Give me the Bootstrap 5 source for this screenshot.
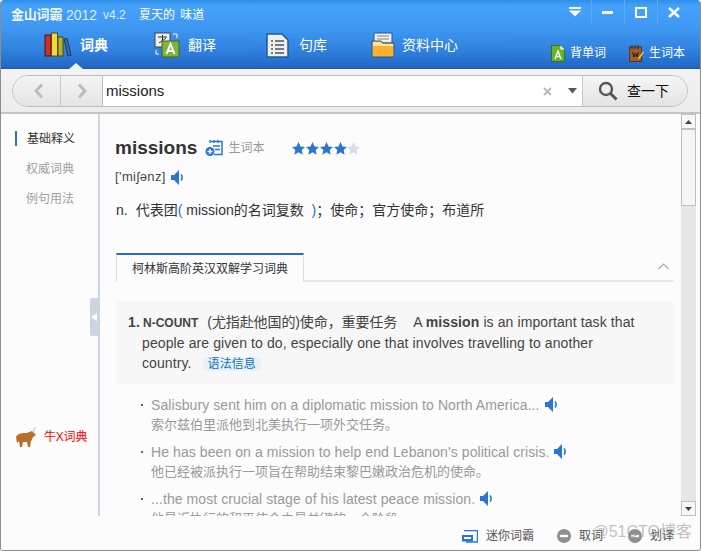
<!DOCTYPE html>
<html lang="zh">
  <head>
    <meta charset="UTF-8" />
    <title>金山词霸 2012</title>
    <link href="https://cdn.jsdelivr.net/npm/bootstrap@5.3.2/dist/css/bootstrap.min.css" rel="stylesheet" />
    <style>
      html, body { margin: 0; height: 100%; overflow: hidden; background: #fff; }
      body { font-family: "Liberation Sans", "Noto Sans CJK SC", sans-serif; font-size: 12px; color: #333; }
      .app-win { width: 701px; height: 551px; position: relative; border: 1px solid #8d8d8d; border-top: 0; border-radius: 4px 4px 3px 3px; overflow: hidden; background: #fcfcfc; }
      .hdr { height: 69px; flex: none; background: linear-gradient(#2f8fe8 0, #45a2fb 6px, #3f98f2 28px, #2f7fdc 52px, #2167c6 67px, #1a5aa8 69px); color: #fff; position: relative; }
      .title-row { height: 28px; padding: 2px 0 0 10px; }
      .brand { font-weight: 700; font-size: 13px; letter-spacing: -.2px; width: 55px; opacity: .93; }
      .ver { font-size: 14px; width: 37px; color: #dceeff; }
      .ver-s { font-size: 12px; width: 36px; color: #dceeff; }
      .slogan { font-size: 12px; word-spacing: 2px; }
      .win-btn { width: 33px; height: 24px; border-left: 1px solid #5ba9f3; }
      .win-first { width: 33px; height: 24px; }
      .nav-cell { position: absolute; top: 31px; height: 28px; font-size: 14px; }
      .nav-main { font-weight: 700; font-size: 14px; }
      .nav-side { position: absolute; top: 44px; height: 18px; font-size: 12px; }
      .notch { position: absolute; left: 68px; top: 63px; width: 0; height: 0; border: 7px solid transparent; border-top: 0; border-bottom: 6px solid #f1f1f1; }
      .search-wrap { height: 45px; flex: none; background: linear-gradient(#f3f3f3, #ececec); border-bottom: 2px solid #c4c4c4; padding: 6px 12px 0 11px; }
      .search-pill { height: 32px; border: 1px solid #bdbdbd; border-radius: 16px; background: #fff; overflow: hidden; }
      .hist { width: 90px; background: linear-gradient(#f4f4f4, #e4e4e4); border-right: 1px solid #bdbdbd; }
      .hist-b { width: 47px; }
      .hist-b + .hist-b { border-left: 1px solid #c8c8c8; width: 42px; }
      .query { font-size: 15px; color: #222; padding-left: 3px; }
      .go-btn { width: 105px; background: linear-gradient(#f5f5f5, #e3e3e3); border-left: 1px solid #c8c8c8; font-size: 14px; color: #111; padding-left: 15px; gap: 9px; }
      .side-pane { width: 99px; flex: none; background: #fcfcfc; border-right: 2px solid #ccd5df; position: relative; padding-top: 15px; }
      .side-item { height: 30px; line-height: 21px; padding-left: 25px; color: #a0a0a0; }
      .side-on { color: #333; padding-left: 26px; position: relative; }
      .side-on::before { content: ""; position: absolute; left: 14px; top: 2px; width: 2px; height: 15px; background: #2a74d6; }
      .side-tab { position: absolute; right: -1px; top: 184px; width: 9px; height: 38px; background: #c9d6e2; border-radius: 2px 0 0 2px; }
      .side-tab::after { content: ""; position: absolute; left: 1px; top: 15px; border: 4px solid transparent; border-left: 0; border-right: 6px solid #fff; }
      .bull-link { color: #f00; margin: auto 0 68px 14px; gap: 6px; font-size: 12px; letter-spacing: -.2px; }
      .pane { overflow: hidden; padding: 22px 7px 0 15px; background: #fcfcfc; }
      .word { font-size: 19px; font-weight: 700; color: #333; line-height: 24px; }
      .word-add { margin-left: 8px; margin-right: 4px; }
      .muted-t { color: #999; margin-left: 1px; }
      .stars { margin-left: 28px; }
      .phon { font-size: 13px; letter-spacing: .4px; line-height: 16px; margin-top: 9px; color: #444; }
      .defn { font-size: 14px; margin-top: 15px; line-height: 20px; padding-left: 1px; }
      .tab-row { margin-top: 33px; height: 29px; border-bottom: 2px solid #e8e8e8; position: relative; margin-left: 1px; }
      .tab-on { width: 188px; height: 29px; border-top: 2px solid #1f6fd0; border-right: 1px solid #ddd; border-left: 1px solid #ddd; background: #fcfcfc; padding: 5px 0 0 15px; color: #333; }
      .tab-up { position: absolute; right: 5px; top: 10px; }
      .sense { margin: 19px 0 0 1px; background: #f7f7f7; height: 83px; padding: 11px 30px 0 26px; font-size: 14px; line-height: 20px; letter-spacing: .1px; color: #444; position: relative; }
      .sense-no { position: absolute; left: 12px; font-weight: 700; }
      .tag { font-size: 12px; font-weight: 700; margin-right: 9px; letter-spacing: 0; }
      .sense-zh { letter-spacing: -.1px; margin-right: 4px; }
      .gram { font-size: 12px; color: #0a73c9; background: #e8f0f8; border-radius: 3px; padding: 0 5px; margin-left: 11px; }
      .eg { margin: 12px 0 0; padding: 0; list-style: none; }
      .eg li { padding-left: 36px; position: relative; height: 47px; font-size: 14px; line-height: 19px; letter-spacing: .08px; color: #999; }
      .eg li::before { content: ""; position: absolute; left: 26px; top: 8px; width: 2px; height: 2px; background: #666; }
      .eg-zh { font-size: 13px; letter-spacing: 0; }
      .spk-i { margin-left: 1px; vertical-align: -2px; }
      .sbar { width: 19px; flex: none; background: #fcfcfc; padding-right: 4px; }
      .sbar-in { background: #e6e6e6; height: 100%; }
      .sbar-btn { height: 15px; background: #f7f7f7; border: 1px solid #bfbfbf; }
      .sbar-thumb { height: 77px; background: #f5f5f5; border: 1px solid #bfbfbf; }
      .foot { height: 34px; flex: none; background: #fcfcfc; color: #555; justify-content: flex-end; padding: 6px 26px 0 0; }
      .foot-i { gap: 8px; }
      .wm { position: absolute; right: 8px; bottom: 8px; font-size: 16px; color: rgba(140,140,140,.55); line-height: 20px; }
    </style>
  </head>
  <body>
    <div class="app-win d-flex flex-column">
      <div class="hdr">
        <div class="title-row d-flex align-items-center">
          <span class="brand">金山词霸</span>
          <span class="ver">2012</span>
          <span class="ver-s">v4.2</span>
          <span class="slogan">夏天的 味道</span>
          <div class="d-flex ms-auto align-self-start" style="margin-top:-2px;margin-right:10px">
            <div class="win-first d-flex align-items-center justify-content-center">
              <svg width="12" height="10" viewBox="0 0 12 10"><path d="M0 0h12v2H0zM0 3.500h12L6 9.500z" fill="#fff"/></svg>
            </div>
            <div class="win-btn d-flex align-items-center justify-content-center">
              <svg width="12" height="4" viewBox="0 0 12 4"><rect width="11" height="3" y="1" fill="#fff"/></svg>
            </div>
            <div class="win-btn d-flex align-items-center justify-content-center">
              <svg width="12" height="11" viewBox="0 0 12 11"><path d="M1 1h10v9H1z" fill="none" stroke="#fff" stroke-width="2"/></svg>
            </div>
            <div class="win-btn d-flex align-items-center justify-content-center">
              <svg width="12" height="11" viewBox="0 0 12 11"><path d="M1 1l10 9M11 1L1 10" stroke="#fff" stroke-width="2.400"/></svg>
            </div>
          </div>
        </div>

        <div class="nav-cell nav-main d-flex align-items-center" style="left:43px;gap:8px">
          <svg width="28" height="26" viewBox="0 0 28 26"><rect x="1" y="3" width="6" height="21" fill="#c8302c" stroke="#4a1512"/><rect x="7.500" y="1" width="6" height="23" fill="#f1d93c" stroke="#5a4d10"/><rect x="14" y="5" width="5" height="19" fill="#b5b52c" stroke="#4a4a10"/><path d="M20 7l3-.6 4 17-3 .6z" fill="#3d6f9e" stroke="#1b3a5a"/></svg>
          <span>词典</span>
        </div>
        <div class="nav-cell d-flex align-items-center" style="left:153px;gap:8px">
          <svg width="26" height="26" viewBox="0 0 26 26"><rect x="1" y="1" width="15" height="14" fill="#eee" stroke="#444"/><path d="M4 5h9M8.500 3v8M5 11l7-5" stroke="#333"/><rect x="8" y="9" width="17" height="16" fill="#7fb43a" stroke="#3d6a18"/><path d="M12.500 22l4-10 4 10M14 19h5" fill="none" stroke="#fff" stroke-width="2"/><path d="M19 2h4v4M2 18v4h3" fill="none" stroke="#fff"/></svg>
          <span>翻译</span>
        </div>
        <div class="nav-cell d-flex align-items-center" style="left:265px;gap:10px">
          <svg width="23" height="25" viewBox="0 0 23 25"><path d="M1 1h15l6 6v17H1z" fill="#eee" stroke="#1e5c9c" stroke-width="1.500"/><path d="M5 8h2m2 0h9M5 12h2m2 0h9M5 16h2m2 0h9M5 20h2m2 0h9" stroke="#555" stroke-width="1.300"/></svg>
          <span>句库</span>
        </div>
        <div class="nav-cell d-flex align-items-center" style="left:370px;gap:7px">
          <svg width="24" height="26" viewBox="0 0 24 26"><path d="M3 1h18v10H3z" fill="#eee" stroke="#1e5c9c"/><path d="M6 4h12M6 7h12" stroke="#888"/><path d="M1 9h9l2 2h11v14H1z" fill="#fbb130" stroke="#1e5c9c"/><path d="M2 10h7l2 2h11v2H2z" fill="#ffe19a"/></svg>
          <span>资料中心</span>
        </div>
        <div class="nav-side d-flex align-items-center" style="left:550px;gap:5px">
          <svg width="14" height="17" viewBox="0 0 14 17"><path d="M.5.500h9l4 4v12H.5z" fill="#67b32e" stroke="#2f7a14"/><path d="M9.500.500v4h4z" fill="#fff"/><path d="M4 14l3-8 3 8M5 11.500h4" fill="none" stroke="#fff" stroke-width="1.400"/></svg>
          <span>背单词</span>
        </div>
        <div class="nav-side d-flex align-items-center" style="left:628px;gap:5px">
          <svg width="15" height="17" viewBox="0 0 15 17"><rect x=".5" y="2" width="12" height="14.500" fill="#9a5f2c" stroke="#5c3514"/><path d="M3 0v4M6 0v4M9 0v4" stroke="#333" stroke-width="1.200"/><path d="M3.500 7l1.500 5 1.500-4 1.500 4 1.500-5" fill="none" stroke="#2a1505"/><path d="M14.500 7l-5 7" stroke="#f0c040" stroke-width="1.500"/></svg>
          <span>生词本</span>
        </div>
        <div class="notch"></div>
      </div>

      <div class="search-wrap">
        <div class="search-pill d-flex align-items-stretch">
          <div class="hist d-flex">
            <div class="hist-b d-flex align-items-center justify-content-center" style="padding-left:4px">
              <svg width="10" height="16" viewBox="0 0 10 16"><path d="M8 1.500L2 8l6 6.500" fill="none" stroke="#bcbcbc" stroke-width="3"/></svg>
            </div>
            <div class="hist-b d-flex align-items-center justify-content-center">
              <svg width="10" height="16" viewBox="0 0 10 16"><path d="M2 1.500L8 8l-6 6.500" fill="none" stroke="#bcbcbc" stroke-width="3"/></svg>
            </div>
          </div>
          <div class="query flex-grow-1 d-flex align-items-center">
            <span>missions</span>
            <svg class="ms-auto" width="9" height="9" viewBox="0 0 9 9"><path d="M1 1l7 7M8 1L1 8" stroke="#b5bcc0" stroke-width="2"/></svg>
            <svg style="margin:0 5px 0 16px" width="9" height="6" viewBox="0 0 9 6"><path d="M0 0h9L4.500 5.500z" fill="#555"/></svg>
          </div>
          <div class="go-btn d-flex align-items-center">
            <svg width="20" height="20" viewBox="0 0 20 20"><circle cx="8" cy="8" r="6" fill="none" stroke="#555" stroke-width="2.400"/><path d="M12.500 12.500l6 6" stroke="#555" stroke-width="3"/></svg>
            <span>查一下</span>
          </div>
        </div>
      </div>

      <div class="d-flex flex-grow-1" style="min-height:0">
        <div class="side-pane d-flex flex-column">
          <div class="side-item side-on">基础释义</div>
          <div class="side-item">权威词典</div>
          <div class="side-item">例句用法</div>
          <div class="bull-link d-flex align-items-center">
            <svg width="23" height="22" viewBox="0 0 23 22"><path d="M1 11c2-4 7-4 11-4 2-1 4-2 5-2l2 2 2 2-3 2c-1 2-1 3-2 4l-1 6h-2l-1-5H8l-1 5H5l-1-6-2 2z" fill="#b96f2a"/><path d="M18 6c-1-3 1-5 3-5-1 2-1 3-1 5z" fill="#ddd"/></svg>
            <span>牛X词典</span>
          </div>
          <div class="side-tab"></div>
        </div>

        <div class="pane flex-grow-1">
          <div class="d-flex align-items-center">
            <span class="word">missions</span>
            <svg class="word-add" width="18" height="18" viewBox="0 0 18 18"><path d="M5 2.500h12v13H9" fill="none" stroke="#2a74d6" stroke-width="1.500"/><path d="M5 1v3M9 1v3M13 1v3M8 7h7M10 10.500h5" stroke="#2a74d6" stroke-width="1.300"/><circle cx="5" cy="12.500" r="4.500" fill="#2a74d6"/><path d="M2.500 12.500h5M5 10v5" stroke="#fff" stroke-width="1.400"/></svg>
            <span class="muted-t">生词本</span>
            <svg class="stars" width="68" height="13" viewBox="0 0 68 13">
              <path id="s1" d="M6.500 0l2 4.400 4.500.5-3.300 3.100.9 4.700-4.100-2.400-4.100 2.400.9-4.700L0 4.900l4.500-.5z" fill="#2a74d6"/>
              <use href="#s1" x="14"/><use href="#s1" x="28"/><use href="#s1" x="42"/>
              <path transform="translate(55)" d="M6.500 0l2 4.400 4.500.5-3.300 3.100.9 4.700-4.100-2.400-4.100 2.400.9-4.700L0 4.900l4.500-.5z" fill="#d5dde6"/>
            </svg>
          </div>
          <div class="phon d-flex align-items-center">
            <span>['miʃənz]</span>
            <svg style="margin-left:5px" width="14" height="15" viewBox="0 0 14 15"><path d="M0 5h3l5-5v15l-5-5H0z" fill="#2a74d6"/><path d="M10 4.500c1.500 1.500 1.500 4.500 0 6" fill="none" stroke="#2a74d6" stroke-width="1.600"/></svg>
          </div>
          <div class="defn"><span style="margin-right:8px">n.</span>代表团<span style="color:#2a74b6">(</span> mission的名词复数 &nbsp;<span style="color:#2a74b6">)</span>；使命；官方使命；布道所</div>

          <div class="tab-row">
            <div class="tab-on">柯林斯高阶英汉双解学习词典</div>
            <svg class="tab-up" width="11" height="7" viewBox="0 0 11 7"><path d="M.5 6l5-5 5 5" fill="none" stroke="#aaa" stroke-width="1.200"/></svg>
          </div>

          <div class="sense">
            <span class="sense-no">1.</span>
            <span class="tag" style="margin-left:1px">N-COUNT</span><span class="sense-zh">(尤指赴他国的)使命，重要任务</span> &nbsp; A <b>mission</b> is an important task that people are given to do, especially one that involves travelling to another country.<span class="gram">语法信息</span>
          </div>

          <ul class="eg">
            <li>Salisbury sent him on a diplomatic mission to North America...
              <svg class="spk-i" width="14" height="15" viewBox="0 0 14 15"><path d="M0 5h3l5-5v15l-5-5H0z" fill="#2a74d6"/><path d="M10 4.500c1.500 1.500 1.500 4.500 0 6" fill="none" stroke="#2a74d6" stroke-width="1.600"/></svg>
              <div class="eg-zh">索尔兹伯里派他到北美执行一项外交任务。</div></li>
            <li>He has been on a mission to help end Lebanon's political crisis.
              <svg class="spk-i" width="14" height="15" viewBox="0 0 14 15"><path d="M0 5h3l5-5v15l-5-5H0z" fill="#2a74d6"/><path d="M10 4.500c1.500 1.500 1.500 4.500 0 6" fill="none" stroke="#2a74d6" stroke-width="1.600"/></svg>
              <div class="eg-zh">他已经被派执行一项旨在帮助结束黎巴嫩政治危机的使命。</div></li>
            <li>...the most crucial stage of his latest peace mission.
              <svg class="spk-i" width="14" height="15" viewBox="0 0 14 15"><path d="M0 5h3l5-5v15l-5-5H0z" fill="#2a74d6"/><path d="M10 4.500c1.500 1.500 1.500 4.500 0 6" fill="none" stroke="#2a74d6" stroke-width="1.600"/></svg>
              <div class="eg-zh">他最近执行的和平使命中最关键的一个阶段</div></li>
          </ul>
        </div>

        <div class="sbar">
          <div class="sbar-in d-flex flex-column">
            <div class="sbar-btn d-flex align-items-center justify-content-center">
              <svg width="7" height="4" viewBox="0 0 7 4"><path d="M0 4h7L3.500 0z" fill="#444"/></svg>
            </div>
            <div class="sbar-thumb"></div>
            <div class="sbar-btn mt-auto d-flex align-items-center justify-content-center">
              <svg width="7" height="4" viewBox="0 0 7 4"><path d="M0 0h7L3.500 4z" fill="#444"/></svg>
            </div>
          </div>
        </div>
      </div>

      <div class="foot d-flex align-items-center">
        <div class="foot-i d-flex align-items-center" style="margin-right:23px">
          <svg width="17" height="13" viewBox="0 0 17 13"><path d="M3 .5h13.500v11.500H5" fill="none" stroke="#2a74d6" stroke-width="1.400"/><path d="M1 5h11v6.500H1z" fill="#2a74d6"/><path d="M3 7h7v2H3z" fill="#fff"/></svg>
          <span>迷你词霸</span>
        </div>
        <div class="foot-i d-flex align-items-center" style="margin-right:25px">
          <svg width="14" height="14" viewBox="0 0 14 14"><circle cx="7" cy="7" r="7" fill="#8f8f8f"/><rect x="3" y="5.800" width="8" height="2.400" fill="#fff"/></svg>
          <span>取词</span>
        </div>
        <div class="foot-i d-flex align-items-center">
          <svg width="14" height="14" viewBox="0 0 14 14"><circle cx="7" cy="7" r="7" fill="#8f8f8f"/><rect x="3" y="5.800" width="8" height="2.400" fill="#fff"/></svg>
          <span>划译</span>
        </div>
      </div>
      <div class="wm">@51CTO博客</div>
    </div>
    <script src="https://cdn.jsdelivr.net/npm/bootstrap@5.3.2/dist/js/bootstrap.bundle.min.js"></script>
  </body>
</html>
